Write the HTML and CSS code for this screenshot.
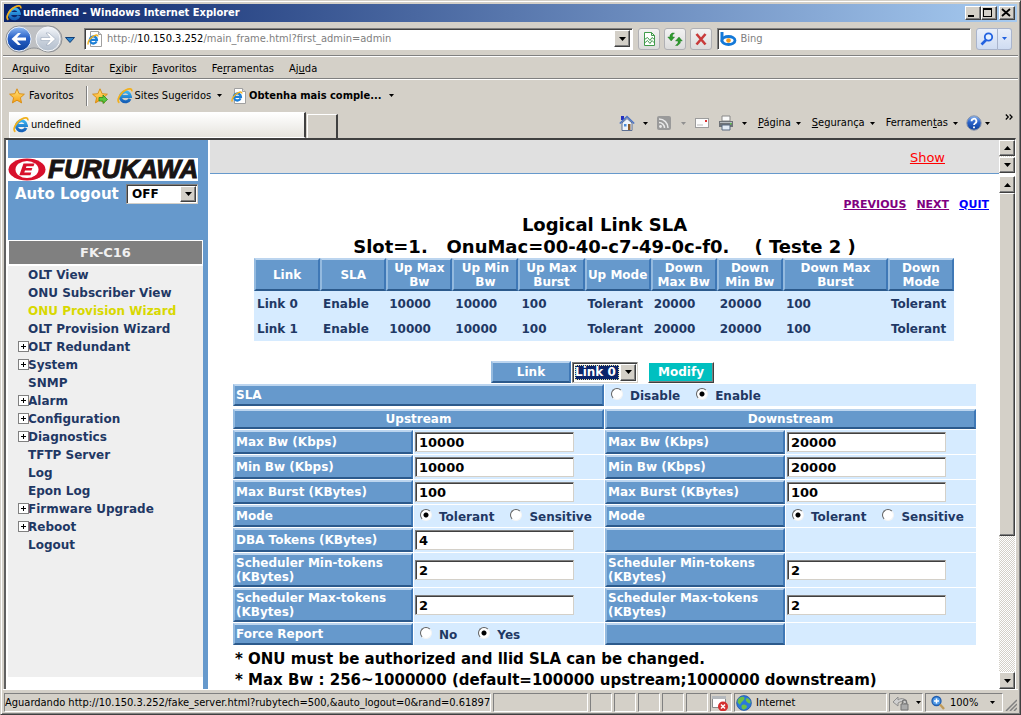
FILE: index.html
```html
<!DOCTYPE html>
<html lang="pt-BR">
<head>
<meta charset="utf-8">
<title>undefined - Windows Internet Explorer</title>
<link rel="stylesheet" href="styles.css">
</head>
<body>
<svg class="defs" aria-hidden="true">
  <defs>
    <linearGradient id="gBlue" x1="0" y1="0" x2="0" y2="1"><stop offset="0" stop-color="#8db8f2"/><stop offset=".45" stop-color="#2a62c8"/><stop offset="1" stop-color="#0c3f9c"/></linearGradient>
    <linearGradient id="gGrey" x1="0" y1="0" x2="0" y2="1"><stop offset="0" stop-color="#f4f7fb"/><stop offset=".5" stop-color="#cbd3de"/><stop offset="1" stop-color="#b4bfcd"/></linearGradient>
    <linearGradient id="gE" x1="0" y1="0" x2="0" y2="1"><stop offset="0" stop-color="#38b2f0"/><stop offset="1" stop-color="#1560b8"/></linearGradient>
    <linearGradient id="gStar" x1="0" y1="0" x2="0" y2="1"><stop offset="0" stop-color="#ffe680"/><stop offset="1" stop-color="#f8a010"/></linearGradient>
    <symbol id="ie" viewBox="0 0 16 16">
      <path d="M13 10.800A5 5 0 1 1 13.400 8.400H4.200" fill="none" stroke="url(#gE)" stroke-width="3"/>
      <path d="M2.400 14.800C-.8 13 2.600 5 8.800 2c3.400-1.700 6.400-1.600 6 1.400" fill="none" stroke="#f2b01c" stroke-width="1.700"/>
    </symbol>
    <symbol id="iepage" viewBox="0 0 16 16">
      <path d="M3.500.5h8l3 3v12h-11z" fill="#fff" stroke="#a0a0a0"/><path d="M11.500.5v3h3" fill="#ddd" stroke="#a0a0a0"/>
      <path d="M9.600 10.400A3.500 3.500 0 1 1 9.900 8.800H3.500" fill="none" stroke="#1d7fd6" stroke-width="2.300"/>
      <path d="M1.400 13.500C0 12 3 6.600 7.400 4.600c2.300-1 3.600-.6 3.300.9" fill="none" stroke="#f2b01c" stroke-width="1.400"/>
    </symbol>
    <symbol id="star" viewBox="0 0 16 16"><path d="M8 .8l2.100 4.900 5.300.5-4 3.500 1.200 5.200L8 12.200l-4.600 2.700 1.200-5.200-4-3.500 5.300-.5z" fill="url(#gStar)" stroke="#d88a10" stroke-width=".9"/></symbol>
    <symbol id="dn" viewBox="0 0 7 4"><path d="M0 0h7L3.500 4z" fill="currentColor"/></symbol>
    <symbol id="up" viewBox="0 0 7 4"><path d="M0 4h7L3.500 0z" fill="currentColor"/></symbol>
  </defs>
</svg>

<div class="window">
  <header class="titlebar">
    <svg class="i16"><use href="#ie"/></svg>
    <h1 class="title">undefined - Windows Internet Explorer</h1>
    <div class="winbtns">
      <button class="wbtn" aria-label="Minimize"><svg viewBox="0 0 12 10"><path d="M2 7h6v2H2z"/></svg></button>
      <button class="wbtn" aria-label="Maximize"><svg viewBox="0 0 12 10"><path d="M1 0h9v9H1zM2 2v6h7V2z" fill-rule="evenodd"/></svg></button>
      <button class="wbtn wclose" aria-label="Close"><svg viewBox="0 0 12 10"><path d="M2 1l8 7M10 1L2 8" stroke="#000" stroke-width="1.800"/></svg></button>
    </div>
  </header>

  <div class="navbar">
    <svg class="navarrows" viewBox="0 0 58 28" role="img" aria-label="Back and forward">
      <path d="M14 1h30a13 13 0 0 1 0 26c-7 0-8-4-15-4s-8 4-15 4a13 13 0 0 1 0-26z" fill="#bfc1c4" stroke="#8f9296"/>
      <circle cx="14" cy="14" r="12" fill="url(#gBlue)" stroke="#e8f0fb"/>
      <circle cx="43" cy="14" r="12" fill="url(#gGrey)" stroke="#f4f6f9"/>
      <path d="M6.500 14l6.500-6h3l-4 4.500h9v3h-9l4 4.500h-3z" fill="#fff"/>
      <path d="M50.500 14L44 8h-3l4 4.500h-9v3h9L41 20h3z" fill="#fff" stroke="#98a6b8" stroke-width=".6"/>
    </svg>
    <button class="bare bluearrow" aria-label="Recent pages"><svg viewBox="0 0 10 6"><path d="M.5.5h9L5 5.500z" fill="#2f86cc" stroke="#123f78"/></svg></button>
    <div class="address">
      <svg class="i16"><use href="#iepage"/></svg>
      <div class="url">http://<b>10.150.3.252</b>/main_frame.html?first_admin=admin</div>
      <button class="boxbtn" aria-label="Address list"><svg class="arr"><use href="#dn"/></svg></button>
    </div>
    <div class="navbtns">
      <button class="nbtn" aria-label="Compatibility view"><svg viewBox="0 0 16 16" fill="none" stroke="#3f9a4a"><path d="M3.500 1.500h7l3 3v10h-10zM10.500 1.500v3h3" fill="#fff"/><path d="M3.500 8.500l3-2 2.500 3 2-3 2.500 2M3.500 12l3-2.500 2.500 3 2-3 2.500 2.500"/></svg></button>
      <button class="nbtn" aria-label="Refresh"><svg viewBox="0 0 16 16" fill="#2e9b2e" stroke="#17701d" stroke-width=".4"><path d="M.8 6l3.400 4 3.400-4H5.500V4l2-2H5L3 4v2zM8.500 10L12 6l3.300 4h-2v2l-2.500 2.500H8.500L11 12v-2z"/></svg></button>
      <button class="nbtn" aria-label="Stop"><svg viewBox="0 0 16 16"><path d="M3.500 3l9 10.500M12.500 3l-9 10.500" stroke="#c83a3a" stroke-width="2.600"/></svg></button>
    </div>
    <div class="search">
      <svg class="bing" viewBox="0 0 17 14"><path d="M2 0v10" stroke="#1479d8" stroke-width="3"/><ellipse cx="8.500" cy="8.500" rx="6.500" ry="4" fill="#fff" stroke="#1479d8" stroke-width="2.800"/><circle cx="8.500" cy="8.500" r="2.300" fill="#f69a1c"/></svg>
      <input class="searchinput" type="text" placeholder="Bing" aria-label="Search">
    </div>
    <div class="searchgo">
      <button class="nbtn gobtn" aria-label="Go"><svg viewBox="0 0 16 16"><circle cx="9.500" cy="6" r="3.700" fill="#e4f0ff" stroke="#2161e0" stroke-width="1.800"/><path d="M7 9l-4.500 4.500" stroke="#2161e0" stroke-width="2.600"/></svg></button>
      <button class="nbtn godrop" aria-label="Search options"><svg class="arrs"><use href="#dn"/></svg></button>
    </div>
  </div>

  <nav class="menubar">
    <a href="#">Ar<u>q</u>uivo</a><a href="#"><u>E</u>ditar</a><a href="#">E<u>x</u>ibir</a><a href="#"><u>F</u>avoritos</a><a href="#">Fe<u>r</u>ramentas</a><a href="#">Aj<u>u</u>da</a>
  </nav>

  <div class="favbar">
    <button class="bare fav"><svg class="i16"><use href="#star"/></svg>Favoritos</button>
    <span class="sep"></span>
    <button class="bare" aria-label="Add to favorites"><svg class="i16" viewBox="0 0 16 16"><use href="#star"/><path d="M7 9.500h4V7l4.500 4.500L11 15.500V13H7z" fill="#5cc83c" stroke="#2a8a1c" stroke-width=".8"/></svg></button>
    <a class="favlink" href="#"><svg class="i16"><use href="#ie"/></svg>Sites Sugeridos<svg class="arrs"><use href="#dn"/></svg></a>
    <a class="favlink strong" href="#"><svg class="i16"><use href="#iepage"/></svg>Obtenha mais comple...<svg class="arrs"><use href="#dn"/></svg></a>
  </div>

  <div class="tabrow">
    <div class="tab"><svg class="i16"><use href="#ie"/></svg>undefined</div>
    <button class="newtab" aria-label="New tab"></button>
    <div class="commands">
      <button class="bare" aria-label="Home"><svg class="i16" viewBox="0 0 16 16"><path d="M2 1h3v4H2z" fill="#2430c0"/><path d="M3 8v7.500h10V8L8 3.500z" fill="#eef3fb" stroke="#5c6f92"/><path d="M.8 8.500L8 1.500l7.200 7" fill="none" stroke="#4a72c4" stroke-width="1.500"/><path d="M5 9h2.500v2.500H5z" fill="#4a8ad8"/><path d="M9 9h2.500v6H9z" fill="#8a5a2c"/></svg></button>
      <svg class="arrs a1"><use href="#dn"/></svg>
      <svg class="i16 a2" viewBox="0 0 16 16"><rect x="1" y="1" width="14" height="14" rx="2" fill="#9a9a9a"/><circle cx="4.500" cy="11.500" r="1.400" fill="#e8e8e8"/><path d="M3 7.500a5.500 5.500 0 0 1 5.500 5.500M3 4a9 9 0 0 1 9 9" fill="none" stroke="#e8e8e8" stroke-width="1.500"/></svg>
      <svg class="arrs a1 dim"><use href="#dn"/></svg>
      <svg class="i16 a2" viewBox="0 0 16 16"><rect x="1.500" y="3.500" width="13" height="9" fill="#fcfcfc" stroke="#9c9c9c"/><path d="M11 5h2v2h-2z" fill="#d33"/><path d="M3 10h6" stroke="#bbb"/></svg>
      <svg class="i16 a2" viewBox="0 0 16 16"><path d="M4 1h8v5H4z" fill="#fafafa" stroke="#888"/><path d="M1 6h14v6H1z" fill="#6f7378"/><path d="M2 7h12v1H2z" fill="#b8bcc0"/><path d="M4 10h8v5H4z" fill="#e4ecf6" stroke="#5a6a80"/><path d="M12 8h1.500v1.500H12z" fill="#5fd04a"/></svg>
      <svg class="arrs a1"><use href="#dn"/></svg>
      <a class="cmd" href="#"><span><u>P</u>ágina</span><svg class="arrs"><use href="#dn"/></svg></a>
      <a class="cmd" href="#"><span><u>S</u>egurança</span><svg class="arrs"><use href="#dn"/></svg></a>
      <a class="cmd" href="#"><span>Ferramen<u>t</u>as</span><svg class="arrs"><use href="#dn"/></svg></a>
      <button class="bare help" aria-label="Help"><svg class="i16" viewBox="0 0 16 16"><circle cx="8" cy="8" r="7.200" fill="url(#gBlue)" stroke="#8a94a8"/><path d="M5.600 6.200a2.400 2.400 0 1 1 3.600 2Q8 9 8 10M8 11.500v1.800" fill="none" stroke="#fff" stroke-width="1.800"/></svg><svg class="arrs"><use href="#dn"/></svg></button>
      <button class="bare more" aria-label="More"><svg viewBox="0 0 8 6"><path d="M.8.5l2.500 2.500L.8 5.500M4.600.5L7.100 3 4.600 5.500" fill="none" stroke="#000" stroke-width="1.200"/></svg></button>
    </div>
  </div>

  <div class="page">
    <aside class="sidebar">
      <div class="brand">
        <div class="logo">
          <svg viewBox="0 0 38 23"><ellipse cx="19" cy="11.500" rx="18.500" ry="11" fill="#d8102c"/><ellipse cx="19" cy="11.500" rx="11.500" ry="8.600" fill="#fff"/><path d="M15.500 5.500h11l-1 2.700h-7l-.6 1.800h6.500l-.9 2.600h-6.500l-.7 2h7l-.9 2.700H11.300z" fill="#d8102c"/></svg>
          <span class="wordmark">FURUKAWA</span>
        </div>
        <div class="logout"><label for="auto">Auto Logout</label>
          <div class="pick off"><select id="auto"><option>OFF</option><option>ON</option></select><span class="boxbtn"><svg class="arr"><use href="#dn"/></svg></span></div>
        </div>
      </div>
      <h2 class="model">FK-C16</h2>
      <ul class="tree">
        <li><a href="#">OLT View</a></li>
        <li><a href="#">ONU Subscriber View</a></li>
        <li><a class="current" href="#">ONU Provision Wizard</a></li>
        <li><a href="#">OLT Provision Wizard</a></li>
        <li class="plus"><a href="#">OLT Redundant</a></li>
        <li class="plus"><a href="#">System</a></li>
        <li><a href="#">SNMP</a></li>
        <li class="plus"><a href="#">Alarm</a></li>
        <li class="plus"><a href="#">Configuration</a></li>
        <li class="plus"><a href="#">Diagnostics</a></li>
        <li><a href="#">TFTP Server</a></li>
        <li><a href="#">Log</a></li>
        <li><a href="#">Epon Log</a></li>
        <li class="plus"><a href="#">Firmware Upgrade</a></li>
        <li class="plus"><a href="#">Reboot</a></li>
        <li><a href="#">Logout</a></li>
      </ul>
    </aside>

    <div class="frames">
      <div class="topframe">
        <div class="topbody"><a href="#">Show</a></div>
        <div class="scroll"><span class="boxbtn"><svg class="arr"><use href="#up"/></svg></span><span class="boxbtn"><svg class="arr"><use href="#dn"/></svg></span></div>
      </div>
      <div class="mainframe">
        <main class="main">
          <nav class="steps"><a href="#">PREVIOUS</a><a href="#">NEXT</a><a class="quit" href="#">QUIT</a></nav>
          <h2 class="heading">Logical Link SLA<br>Slot=1.&nbsp;&nbsp; OnuMac=00-40-c7-49-0c-f0.&nbsp;&nbsp;&nbsp; ( Teste 2 )</h2>
          <table class="links">
            <colgroup><col span="8"><col class="wide"><col></colgroup>
            <thead><tr><th>Link</th><th>SLA</th><th>Up Max Bw</th><th>Up Min Bw</th><th>Up Max Burst</th><th>Up Mode</th><th>Down Max Bw</th><th>Down Min Bw</th><th>Down Max<br>Burst</th><th>Down Mode</th></tr></thead>
            <tbody>
              <tr><td>Link 0</td><td>Enable</td><td>10000</td><td>10000</td><td>100</td><td>Tolerant</td><td>20000</td><td>20000</td><td>100</td><td>Tolerant</td></tr>
              <tr><td>Link 1</td><td>Enable</td><td>10000</td><td>10000</td><td>100</td><td>Tolerant</td><td>20000</td><td>20000</td><td>100</td><td>Tolerant</td></tr>
            </tbody>
          </table>
          <form>
            <div class="linkrow">
              <label class="bevel linklabel" for="link">Link</label>
              <div class="pick"><select id="link" class="focused"><option>Link 0</option><option>Link 1</option></select><span class="boxbtn"><svg class="arr"><use href="#dn"/></svg></span></div>
              <button class="modify" type="button">Modify</button>
            </div>
            <div class="slarow">
              <div class="bevel">SLA</div>
              <div class="field radios"><label><input type="radio" name="sla">Disable</label><label><input type="radio" name="sla" checked>Enable</label></div>
            </div>
            <div class="grid">
              <div class="bevel head">Upstream</div><div class="bevel head">Downstream</div>
              <label class="bevel" for="u1">Max Bw (Kbps)</label><div class="field"><input id="u1" class="box" value="10000"></div>
              <label class="bevel" for="d1">Max Bw (Kbps)</label><div class="field"><input id="d1" class="box" value="20000"></div>
              <label class="bevel" for="u2">Min Bw (Kbps)</label><div class="field"><input id="u2" class="box" value="10000"></div>
              <label class="bevel" for="d2">Min Bw (Kbps)</label><div class="field"><input id="d2" class="box" value="20000"></div>
              <label class="bevel" for="u3">Max Burst (KBytes)</label><div class="field"><input id="u3" class="box" value="100"></div>
              <label class="bevel" for="d3">Max Burst (KBytes)</label><div class="field"><input id="d3" class="box" value="100"></div>
              <div class="bevel">Mode</div><div class="field radios"><label><input type="radio" name="um" checked>Tolerant</label><label><input type="radio" name="um">Sensitive</label></div>
              <div class="bevel">Mode</div><div class="field radios"><label><input type="radio" name="dm" checked>Tolerant</label><label><input type="radio" name="dm">Sensitive</label></div>
              <label class="bevel" for="u4">DBA Tokens (KBytes)</label><div class="field"><input id="u4" class="box" value="4"></div>
              <div class="bevel"></div><div class="field"></div>
              <label class="bevel" for="u5">Scheduler Min-tokens (KBytes)</label><div class="field"><input id="u5" class="box" value="2"></div>
              <label class="bevel" for="d5">Scheduler Min-tokens (KBytes)</label><div class="field"><input id="d5" class="box" value="2"></div>
              <label class="bevel" for="u6">Scheduler Max-tokens (KBytes)</label><div class="field"><input id="u6" class="box" value="2"></div>
              <label class="bevel" for="d6">Scheduler Max-tokens (KBytes)</label><div class="field"><input id="d6" class="box" value="2"></div>
              <div class="bevel">Force Report</div><div class="field radios wideradios"><label><input type="radio" name="fr">No</label><label><input type="radio" name="fr" checked>Yes</label></div>
              <div class="bevel"></div><div class="field"></div>
            </div>
          </form>
          <p class="note">* ONU must be authorized and llid SLA can be changed.</p>
          <p class="note">* Max Bw : 256~1000000 (default=100000 upstream;1000000 downstream)</p>
        </main>
        <div class="scroll"><span class="boxbtn"><svg class="arr"><use href="#up"/></svg></span><span class="thumb"></span><span class="track"></span><span class="boxbtn"><svg class="arr"><use href="#dn"/></svg></span></div>
      </div>
    </div>
  </div>

  <footer class="status">
    <div class="pane msg">Aguardando http://10.150.3.252/fake_server.html?rubytech=500,&amp;auto_logout=0&amp;rand=0.61897</div>
    <div class="pane grow"></div>
    <div class="pane small"></div><div class="pane small"></div><div class="pane small"></div><div class="pane small"></div><div class="pane small"></div>
    <div class="pane small"><svg class="i18" viewBox="0 0 18 18"><path d="M1.500 3.500h13v10h-13z" fill="#fff" stroke="#8a8a8a"/><path d="M1 2h14v3H1z" fill="#b4b8bc"/><circle cx="12" cy="12.500" r="5" fill="#d43030"/><path d="M10 10.500l4 4M14 10.500l-4 4" stroke="#fff" stroke-width="1.500"/></svg></div>
    <div class="pane zone"><svg class="i16" viewBox="0 0 16 16"><circle cx="8" cy="8" r="7.400" fill="#2a78dc" stroke="#1a4f9c" stroke-width=".7"/><path d="M2 4.500C4 1 8 1 8.500 3S5 7 4.500 9 2 8 1.500 7zM11 3c3 1 4 4 3.500 5s-3 0-4-1.500S9.500 4 11 3zM6 10c2-1.500 5 0 5 1.500S8.500 15 7 14.500 5 11 6 10z" fill="#6cc048"/></svg>Internet</div>
    <div class="pane lock"><svg class="i18" viewBox="0 0 18 18"><path d="M1 8l5-5v3c4-3 8-1 9 3l-2 1C11 7 9 7 6 9v3z" fill="#d0d0d0" stroke="#8e8e8e"/><path d="M9 10h7v6H9z" fill="#aaa" stroke="#777"/><path d="M10.500 10V8a2 2 0 0 1 4 0v2" fill="none" stroke="#777" stroke-width="1.300"/></svg><svg class="arrs"><use href="#dn"/></svg></div>
    <div class="pane zoom"><svg class="i16" viewBox="0 0 16 16"><circle cx="6.500" cy="6" r="4.500" fill="#4f9ae8" stroke="#1f5cae" stroke-width="1.300"/><path d="M4 6h5M6.500 3.500v5" stroke="#fff" stroke-width="1.500"/><path d="M10 9.500l4 4.500" stroke="#c09a58" stroke-width="2.400"/></svg><span>100%</span><svg class="arrs"><use href="#dn"/></svg></div>
    <svg class="grip" viewBox="0 0 12 12"><path d="M1 12L12 1M5 12l7-7M9 12l3-3" stroke="#808080" stroke-width="1.500"/></svg>
  </footer>
</div>
</body>
</html>
```
FILE: styles.css
```css
* { box-sizing: border-box; }

:root {
  --face: #d4d0c8;
  --blue: #6699cc;
  --pale: #d6ebff;
  --ink: #1f3864;
  --ui: "DejaVu Sans Condensed", Tahoma, sans-serif;
  --web: Verdana, "DejaVu Sans", sans-serif;
}

body {
  margin: 0;
  background: var(--face);
  font: 11px/14px var(--ui);
  color: #000;
}

button, input, select { font: inherit; color: inherit; margin: 0; padding: 0; border-radius: 0; }
a { color: inherit; text-decoration: none; }
svg { display: block; flex: none; }
.defs { position: absolute; width: 0; height: 0; }
.i16 { width: 16px; height: 16px; }
.i18 { width: 18px; height: 18px; }
.arr { width: 7px; height: 4px; }
.arrs { width: 5px; height: 3px; }
.bare { display: flex; align-items: center; background: none; border: 0; }

.window {
  display: flex;
  flex-direction: column;
  height: 100vh;
  overflow: hidden;
  padding: 2px;
  border: 1px solid;
  border-color: #d4d0c8 #404040 #404040 #d4d0c8;
  box-shadow: inset 1px 1px #fff, inset -1px -1px #808080;
}

.titlebar {
  display: flex;
  align-items: center;
  flex: none;
  height: 18px;
  margin: 1px 1px 0;
  padding: 0 2px;
  background: linear-gradient(90deg, #0a246a, #a6caf0);
  color: #fff;
}
.title { flex: 1; margin: 0 0 0 1px; font: bold 11px/14px var(--ui); }
.winbtns { display: flex; }
.wbtn {
  width: 16px;
  height: 14px;
  background: var(--face);
  border: 1px solid;
  border-color: #fff #404040 #404040 #fff;
  box-shadow: inset -1px -1px #808080;
}
.wbtn svg { width: 12px; height: 10px; }
.wclose { margin-left: 2px; }

.navbar {
  display: flex;
  align-items: center;
  flex: none;
  height: 34px;
  padding: 0 6px 0 2px;
  border-bottom: 1px solid #808080;
  box-shadow: 0 1px #fff;
}
.navarrows { width: 58px; height: 28px; }
.bluearrow { margin: 2px 9px 0 2px; }
.bluearrow svg { width: 10px; height: 6px; }
.address, .search {
  display: flex;
  align-items: center;
  height: 22px;
  background: #fff;
  border: 1px solid;
  border-color: #808080 #fff #fff #808080;
  box-shadow: inset 1px 1px #404040;
  padding: 2px;
}
.address { flex: 551 1 0; }
.url { flex: 1; margin-left: 4px; color: #808080; }
.url b { font-weight: normal; color: #000; }
.boxbtn {
  display: flex;
  align-items: center;
  justify-content: center;
  flex: none;
  width: 16px;
  height: 17px;
  background: var(--face);
  border: 1px solid;
  border-color: #fff #404040 #404040 #fff;
  box-shadow: inset -1px -1px #808080;
  color: #000;
}
.navbtns { display: flex; gap: 4px; margin: 0 5px; }
.nbtn {
  display: flex;
  align-items: center;
  justify-content: center;
  width: 22px;
  height: 22px;
  background: linear-gradient(#f2f2f2, #dcdcdc);
  border: 1px solid #b0b0b4;
  border-radius: 3px;
}
.nbtn svg { width: 16px; height: 16px; }
.search { flex: 251 1 0; }
.bing { width: 17px; height: 14px; }
.searchinput { flex: 1; min-width: 0; margin-left: 3px; border: 0; outline: 0; background: none; }
.searchinput::placeholder { color: #808080; opacity: 1; }
.searchgo { display: flex; margin-left: 5px; }
.searchgo .nbtn { background: linear-gradient(#e9effa, #cfdcf2); border-color: #a9b4cc; color: #2161e0; }
.gobtn { border-radius: 3px 0 0 3px; }
.godrop { width: 14px; border-left: 0; border-radius: 0 3px 3px 0; }
.godrop svg { width: 5px; height: 3px; }

.menubar {
  display: flex;
  gap: 15px;
  flex: none;
  height: 23px;
  padding: 6px 9px 0;
  border-bottom: 1px solid #808080;
  box-shadow: 0 1px #fff;
}

.favbar {
  display: flex;
  align-items: center;
  flex: none;
  height: 33px;
  padding: 0 6px;
}
.fav { gap: 4px; }
.sep { width: 2px; height: 20px; margin: 0 4px 0 12px; border-left: 1px solid #808080; border-right: 1px solid #fff; }
.favlink { display: flex; align-items: center; margin-left: 9px; }
.favlink .arrs { margin: 0 4px 0 6px; }
.favlink .i16 { margin-right: 2px; }
.strong { font-weight: bold; margin-left: 5px; }
.strong .arrs { margin-left: 8px; }

.tabrow { display: flex; align-items: flex-end; flex: none; height: 26px; padding: 0 0 0 6px; }
.tab {
  display: flex;
  align-items: center;
  gap: 2px;
  flex: 294 1 0;
  height: 26px;
  padding-left: 3px;
  background: linear-gradient(#fff, #e6e4de);
  border: 1px solid #fff;
  border-right: 2px solid #404040;
}
.newtab { width: 31px; height: 24px; margin-left: 1px; background: var(--face); border: 1px solid #fff; border-right: 2px solid #404040; border-bottom: 0; }
.commands { display: flex; align-items: center; flex: 682 1 0; justify-content: flex-end; height: 26px; padding: 0 5px 4px 0; }
.a1, .a2 { margin-left: 8px; }
.dim { color: #909090; margin-left: 9px; }
.cmd { display: flex; align-items: center; gap: 5px; margin-left: 11px; }
.help { margin-left: 8px; gap: 3px; }
.more { margin: 0 0 12px 15px; }
.more svg { width: 8px; height: 6px; }

.page {
  display: flex;
  flex: 1;
  min-height: 0;
  margin: 0 2px 0 1px;
  padding-left: 2px;
  border-top: 2px solid #404040;
  border-left: 2px solid #606060;
  border-right: 1px solid #fff;
  background: #fff;
  font: bold 12px/14px var(--web);
  color: var(--ink);
}

.sidebar { display: flex; flex-direction: column; width: 200px; flex: none; border-right: 5px solid var(--blue); padding-bottom: 12px; }
.brand { height: 100px; padding-top: 18px; background: var(--blue); }
.logo { display: flex; align-items: center; width: 190px; height: 23px; background: #fff; }
.logo svg { width: 38px; height: 23px; }
.wordmark { font: italic bold 26px/23px "Liberation Sans", Arial, sans-serif; color: #181414; -webkit-text-stroke: 1px #181414; margin-left: 2px; }
.logout { display: flex; align-items: center; justify-content: space-between; width: 190px; height: 26px; padding-left: 7px; font-size: 15px; color: #fff; }
.pick { display: flex; width: 66px; height: 21px; padding: 1px; background: #fff; border: 1px solid; border-color: #808080 #d4d0c8 #d4d0c8 #808080; box-shadow: inset 1px 1px #404040; }
.pick select { flex: 1; min-width: 0; appearance: none; border: 0; outline: 0; background: #fff; color: #000; margin: 1px; }
.off { width: 72px; height: 20px; font-size: 12px; }
.off select { padding-left: 3px; }
.pick .boxbtn { height: auto; }
.pick .focused { background: #0a246a; color: #fff; outline: 1px dotted #e8e0a0; outline-offset: -1px; }
.model { flex: none; margin: 0; height: 26px; background: #808080; border: 1px solid #fff; border-width: 1px 1px 2px; color: #f0f0f0; font: bold 13px/23px var(--web); text-align: center; }
.tree { flex: 1; margin: 0; padding: 0 0 0 13px; list-style: none; background: #efefef; line-height: 18px; }
.tree li { position: relative; padding-left: 7px; }
.tree .current { color: #d8d800; }
.plus::before {
  content: "";
  position: absolute;
  left: -3px;
  top: 3px;
  width: 9px;
  height: 9px;
  border: 1px solid #808080;
  background: linear-gradient(#000, #000) 50% 50% / 5px 1px no-repeat, linear-gradient(#000, #000) 50% 50% / 1px 5px no-repeat, #fff;
}

.frames { display: flex; flex-direction: column; flex: 1; min-width: 0; padding-left: 2px; }
.topframe { display: flex; flex: none; height: 34px; }
.topbody { flex: 1; padding: 11px 54px 0 0; background: #e0e0e0; border-bottom: 1px solid var(--blue); text-align: right; font-size: 13px; }
.topbody a { color: #f00; font-weight: normal; text-decoration: underline; }
.scroll { display: flex; flex-direction: column; width: 16px; flex: none; background: repeating-conic-gradient(#fff 0 25%, #d4d0c8 0 50%) 0 0 / 2px 2px; }
.topframe .scroll { justify-content: space-between; height: 33px; }
.topframe .boxbtn { height: 16px; }
.thumb { flex: 344 1 0; background: var(--face); border: 1px solid; border-color: #fff #404040 #404040 #fff; box-shadow: inset -1px -1px #808080; }
.track { flex: 137 1 0; }
.mainframe { display: flex; flex: 1; min-height: 0; padding-top: 2px; }
.main { flex: 1; min-width: 0; overflow: hidden; padding: 22px 23px 0; }
.steps { display: flex; justify-content: flex-end; gap: 10px; margin-right: -13px; font-size: 11px; color: #800080; }
.steps a { text-decoration: underline; }
.steps .quit { color: #00f; }
.heading { margin: 2px 0 0; font: bold 18px/22px var(--web); color: #000; text-align: center; white-space: nowrap; }

.links { width: calc(100% - 43px); margin: 0 21px; table-layout: fixed; border-collapse: separate; border-spacing: 0; background: var(--pale); }
.links .wide { width: 15%; }
.links th, .bevel { background: var(--blue); color: #fff; border: 2px solid; border-color: #bcd5ef #3f78b6 #2c5a8c #94badf; }
.links th { height: 33px; padding: 0; line-height: 14px; }
.links td { height: 25px; padding: 0 0 0 3px; white-space: nowrap; }

.linkrow { display: flex; justify-content: center; align-items: center; gap: 1px; height: 22px; margin: 20px 4px 1px 0; }
.linklabel { width: 80px; justify-content: center; height: 22px; }
.modify { width: 66px; height: 21px; margin-left: 9px; background: #00c0c0; color: #fff; border: 1px solid; border-color: #fff #404040 #404040 #fff; box-shadow: inset -1px -1px #808080; }
.slarow { display: grid; grid-template-columns: 1fr 1fr; gap: 1px; height: 22px; margin-bottom: 3px; }
.bevel { display: flex; align-items: center; padding: 0 1px; }
.field { display: flex; align-items: center; background: var(--pale); padding-left: 1px; }
.grid { display: grid; grid-template-columns: 180fr 190fr 180fr 190fr; grid-template-rows: 20px repeat(3, 24px) 22px 24px repeat(2, 34px) 22px; gap: 1px; }
.head { grid-column: span 2; justify-content: center; }
.box { width: 159px; height: 20px; padding: 0 3px; background: #fff; border: 1px solid; border-color: #808080 #d4d0c8 #d4d0c8 #808080; box-shadow: inset 1px 1px #404040; color: #000; font-size: 13px; }
.radios { gap: 16px; padding-left: 6px; }
.wideradios { gap: 21px; }
.radios label { display: flex; align-items: center; gap: 7px; padding-top: 2px; }
.radios input {
  appearance: none;
  width: 12px;
  height: 12px;
  margin-top: -4px;
  border: 1px solid;
  border-color: #606060 #f4f4f4 #f4f4f4 #606060;
  border-radius: 50%;
  background: #fff;
}
.radios input:checked { background: radial-gradient(circle, #000 2px, #fff 3px); }
.note { margin: 0; padding-left: 2px; font-size: 15px; line-height: 21px; color: #000; white-space: nowrap; }
form + .note { margin-top: 4px; }

.status { display: flex; gap: 2px; flex: none; height: 23px; padding: 3px 1px 1px; border-top: 1px solid #fff; }
.pane { display: flex; align-items: center; height: 19px; border: 1px solid; border-color: #808080 #fff #fff #808080; white-space: nowrap; overflow: hidden; }
.msg { flex: none; }
.grow { flex: 96 1 0; }
.small { width: 22px; }
.zone { flex: 155 1 0; gap: 4px; padding-left: 1px; }
.lock { width: 34px; gap: 6px; padding-left: 2px; }
.zoom { width: 78px; gap: 4px; padding-left: 4px; }
.zoom .arrs { margin-left: 8px; }
.grip { width: 12px; height: 12px; align-self: flex-end; }
```
